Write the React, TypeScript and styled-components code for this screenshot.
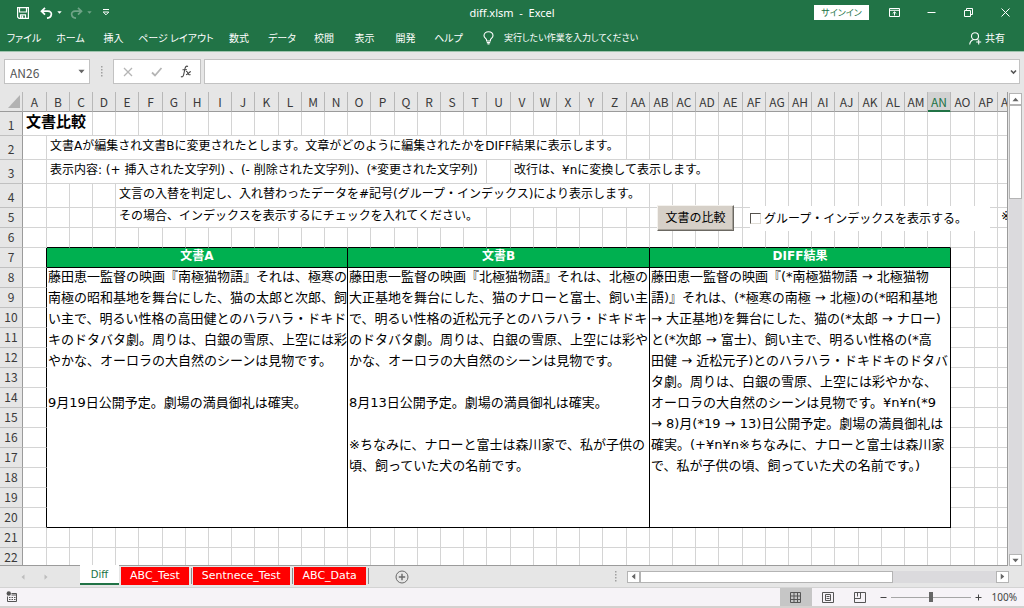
import React from 'react';
import styled, { createGlobalStyle, css } from 'styled-components';

const cjk = '"Noto Sans CJK JP", sans-serif';
const cellFont = `"DejaVu Sans", ${cjk}`;
const green = '#217346';
const grid = '#d4d4d4';
const chrome = '#e6e6e6';

const GlobalStyle = createGlobalStyle`
  *, *::before, *::after { box-sizing: border-box; }
  body { margin: 0; overflow: hidden; background: ${chrome}; }
  button, input { font: inherit; color: inherit; margin: 0; }
`;

const Shell = styled.div`
  display: flex;
  flex-direction: column;
  height: 100vh;
  background: ${chrome};
  font-family: ${cjk};
  font-size: 10px;
  line-height: 16px;
`;

const PlainButton = styled.button`
  display: flex;
  align-items: center;
  justify-content: center;
  padding: 0;
  border: 0;
  background: transparent;
`;

/* Title bar */

const TitleBar = styled.header`
  display: grid;
  grid-template-columns: 1fr auto 1fr;
  align-items: center;
  height: 25px;
  background: ${green};
  color: #fff;
`;

const QuickAccess = styled.div`
  display: flex;
  align-items: center;
  gap: 4px;
  height: 25px;
  padding-left: 17px;
`;

const QuickButton = styled(PlainButton)<{ $dim?: boolean; $after?: number }>`
  opacity: ${(p) => (p.$dim ? 0.35 : 1)};
  margin-right: ${(p) => p.$after ?? 0}px;
`;

const DocTitle = styled.h1`
  margin: 0;
  font: 400 11px/16px "Noto Sans", sans-serif;
  white-space: pre;
`;

const WindowArea = styled.div`
  display: flex;
  align-items: center;
  justify-content: flex-end;
`;

const SignIn = styled(PlainButton)`
  width: 55px;
  height: 15px;
  margin-right: 7px;
  background: #fff;
  color: ${green};
  font-size: 9px;
  font-feature-settings: "palt";
`;

const WindowButton = styled(PlainButton)`
  width: 37px;
  height: 25px;
`;

/* Ribbon */

const Ribbon = styled.nav`
  display: flex;
  align-items: center;
  height: 27px;
  border-bottom: 1px solid #9fc5ae;
  background: ${green};
  color: #fff;
  font-feature-settings: "palt";
`;

const RibbonTab = styled(PlainButton)<{ $width: number }>`
  width: ${(p) => p.$width}px;
  height: 26px;
  white-space: nowrap;
`;

const TellMe = styled(PlainButton)`
  gap: 10px;
  padding-left: 12px;
  font-size: 9px;
  white-space: nowrap;
`;

const Share = styled(PlainButton)`
  gap: 3px;
  margin-left: auto;
  padding-right: 19px;
`;

/* Formula bar */

const FormulaBar = styled.div`
  display: flex;
  align-items: center;
  padding: 7px 4px 8px;
`;

const Field = styled.div`
  display: flex;
  align-items: center;
  height: 25px;
  border: 1px solid #c2c2c2;
  background: #fff;
`;

const NameField = styled(Field)`
  width: 86px;
  padding: 0 4px 0 5px;
`;

const FormulaField = styled(Field)`
  flex: 1;
  margin-left: 3px;
  padding-right: 2px;
`;

const TextInput = styled.input`
  flex: 1;
  min-width: 0;
  height: 22px;
  padding: 2px 0 0;
  border: 0;
  outline: 0;
  background: transparent;
  color: #555;
  font-size: 12px;
`;

const Divider = styled.div`
  display: flex;
  justify-content: center;
  width: 23px;
`;

const FormulaTools = styled(Field)`
  justify-content: space-between;
  width: 88px;
  padding: 0 8px;
`;

/* Worksheet */

const Workspace = styled.div`
  display: flex;
  flex: 1;
  min-height: 0;
`;

const Viewport = styled.main`
  position: relative;
  flex: 1;
  min-width: 0;
  overflow: hidden;
  border-right: 1px solid #9b9b9b;
  border-bottom: 1px solid #9b9b9b;
  background: #fff;
`;

const Sheet = styled.table`
  width: 0;
  table-layout: fixed;
  border-collapse: separate;
  border-spacing: 0;
  font-family: ${cellFont};
  font-size: 12px;
  color: #000;
`;

const Row = styled.tr<{ $height: number }>`
  height: ${(p) => p.$height}px;
`;

const headerText = css`
  padding: 0;
  background: ${chrome};
  color: #3a3a3a;
  font: 400 12px/18px ${cjk};
  text-align: center;
  overflow: hidden;
  white-space: nowrap;
`;

const ColumnHeader = styled.th<{ $selected?: boolean }>`
  ${headerText}
  border-right: 1px solid #b8b8b8;
  border-bottom: 1px solid #9b9b9b;
  ${(p) =>
    p.$selected &&
    css`
      background: #d2d2d2;
      color: ${green};
      border-bottom-color: ${green};
      box-shadow: inset 0 -1px 0 ${green};
    `}
`;

const SelectAllMark = styled.svg`
  display: block;
  margin-left: auto;
`;

const RowHeader = styled.th`
  ${headerText}
  padding-bottom: 1px;
  vertical-align: bottom;
  border-right: 1px solid #9b9b9b;
  border-bottom: 1px solid #c0c0c0;
`;

const Cell = styled.td<{ $edgeRight?: boolean; $edgeBottom?: boolean }>`
  padding: 0 0 3px 3px;
  line-height: 16px;
  white-space: pre;
  vertical-align: middle;
  border-right: 1px solid ${(p) => (p.$edgeRight ? '#000' : grid)};
  border-bottom: 1px solid ${(p) => (p.$edgeBottom ? '#000' : grid)};
`;

const TitleCell = styled(Cell)`
  font-size: 15px;
  font-weight: 700;
`;

const HeadingCell = styled(Cell)`
  padding-left: 0;
  background: #00b050;
  color: #fff;
  font-weight: 700;
  text-align: center;
`;

const BodyCell = styled(Cell)`
  padding: 0 0 0 1px;
  font-size: 13px;
  line-height: 21px;
  vertical-align: top;
  overflow: hidden;
`;

const BodyText = styled.div`
  margin-top: -2px;
`;

const CompareButton = styled.button`
  position: absolute;
  left: 657px;
  top: 113px;
  width: 77px;
  height: 26px;
  padding: 0;
  border: 1px solid;
  border-color: #f4f2ee #6b6862 #6b6862 #f4f2ee;
  box-shadow: inset -1px -1px 0 #a5a199;
  background: #d6d0c8;
  color: #000;
  font-family: ${cellFont};
  font-size: 12px;
`;

const IndexOption = styled.label`
  position: absolute;
  left: 750px;
  top: 114px;
  display: flex;
  align-items: center;
  gap: 3px;
  width: 240px;
  height: 25px;
  background: #fff;
  color: #000;
  font-family: ${cellFont};
  font-size: 12px;
`;

const CheckBox = styled.input`
  appearance: none;
  width: 11px;
  height: 11px;
  border: 1px solid;
  border-color: #55524d #e0ddd6 #e0ddd6 #55524d;
  background: #fff;
`;

/* Scroll bars */

const VerticalBar = styled.div`
  display: flex;
  flex-direction: column;
  width: 16px;
  padding: 1px 2px 0 1px;
`;

const Arrow = styled(PlainButton)`
  flex: none;
  width: 13px;
  height: 12px;
  border: 1px solid #b4b4b4;
  background: #fff;
`;

const VerticalTrack = styled.div`
  flex: 1;
  background: #dbdadd;
`;

const VerticalThumb = styled.div`
  height: 21%;
  border: 1px solid #b4b4b4;
  background: #fff;
`;

const HorizontalBar = styled.div`
  display: flex;
  width: 382px;
  margin-right: 15px;
`;

const HorizontalTrack = styled.div`
  flex: 1;
  background: #dbdadd;
`;

const HorizontalThumb = styled.div`
  width: 71%;
  height: 12px;
  border: 1px solid #b4b4b4;
  background: #fff;
`;

/* Sheet tabs */

const TabStrip = styled.div`
  display: flex;
  align-items: center;
  height: 21px;
`;

const TabNav = styled.div`
  display: flex;
  justify-content: center;
  gap: 17px;
  width: 80px;
  padding-right: 11px;
`;

const Tabs = styled.div`
  position: relative;
  display: flex;
  align-items: center;
  align-self: stretch;
  margin-top: -1px;
  font-family: "DejaVu Sans", sans-serif;
  font-size: 11px;
`;

const ActiveTab = styled(PlainButton)`
  align-self: flex-start;
  width: 39px;
  height: 20px;
  margin-right: 2px;
  padding-top: 2px;
  border-bottom: 2px solid ${green};
  background: #fff;
  color: ${green};
  font-size: 10px;
`;

const RedTab = styled(PlainButton)`
  height: 18px;
  padding: 0 9px;
  background: #f00;
  color: #fff;
`;

const TabGap = styled.span`
  width: 1px;
  height: 16px;
  margin: 0 1px 0 2px;
  background: #8a8a8a;
`;

const AddSheet = styled(PlainButton)`
  margin-left: 25px;
`;

const StripDots = styled.div`
  display: flex;
  margin: 0 10px 0 auto;
`;

/* Status bar */

const StatusBar = styled.footer`
  display: flex;
  align-items: center;
  height: 21px;
  padding: 0 7px 0 6px;
  border-top: 1px solid #d3d3d3;
  border-bottom: 2px solid #d4d1cf;
  background: #f6f3f7;
  color: #444;
  font-family: "Noto Sans", sans-serif;
`;

const ViewButtons = styled.div`
  display: flex;
  align-self: stretch;
  margin-left: auto;
`;

const ViewButton = styled(PlainButton)<{ $on?: boolean }>`
  width: 32px;
  background: ${(p) => (p.$on ? '#c6c6c6' : 'transparent')};
`;

const ZoomControl = styled.div`
  display: flex;
  align-items: center;
  gap: 4px;
  margin: 0 10px 0 4px;
`;

const ZoomRange = styled.input`
  appearance: none;
  width: 80px;
  height: 10px;
  background: linear-gradient(#a6a6a6, #a6a6a6) center / 100% 1px no-repeat;
  &::-webkit-slider-thumb {
    appearance: none;
    width: 4px;
    height: 10px;
    background: #666;
  }
`;

const Caret = ({ color = '#666', turn = 0, size = 7 }: { color?: string; turn?: number; size?: number }) => (
  <svg width={size} height={size} viewBox="0 0 8 8" aria-hidden="true">
    <path d="M0.5 2 H7.5 L4 6 Z" fill={color} transform={`rotate(${turn} 4 4)`} />
  </svg>
);

const Dots = () => (
  <svg width="2" height="11" viewBox="0 0 2 11" fill="#a0a0a0" aria-hidden="true">
    <path d="M0 0h1.500v1.500h-1.500zM0 3h1.500v1.500h-1.500zM0 6h1.500v1.500h-1.500zM0 9h1.500v1.500h-1.500z" />
  </svg>
);

const SaveIcon = () => (
  <svg width="12" height="12" viewBox="0 0 12 12" fill="none" stroke="#fff" strokeWidth="1.200">
    <path d="M0.6 0.6H11.4V11.400H2L0.600 10Z" />
    <path d="M2.500 0.600V5H9.500V0.600M3.500 11.400V7.800H8.500V11.400" />
    <path d="M4.500 8.500H6.200V11H4.500Z" fill="#fff" stroke="none" />
  </svg>
);

const UndoIcon = ({ flip }: { flip?: boolean }) => (
  <svg width="13" height="12" viewBox="0 0 13 12" fill="none" stroke="#fff" strokeWidth="1.700">
    <g transform={flip ? 'translate(13 0) scale(-1 1)' : undefined}>
      <path d="M5 0.800L1.500 4.200L5 7.600M1.800 4.200H7.800C10.500 4.200 11.600 5.800 11.300 7.600C11 9.600 9.500 10.900 7 11.200" />
    </g>
  </svg>
);

const CustomizeIcon = () => (
  <svg width="8" height="7" viewBox="0 0 8 7" fill="none" stroke="#fff">
    <path d="M1 0.500H7M1.200 3H6.800L4 5.800Z" />
  </svg>
);

const RibbonOptionsIcon = () => (
  <svg width="11" height="9" viewBox="0 0 11 9" fill="none" stroke="#fff">
    <path d="M0.500 0.500H10.500V8.500H0.500ZM0.500 2.300H10.500M5.500 7.500V4M3.700 5.500L5.500 3.800L7.300 5.500" />
  </svg>
);

const BulbIcon = () => (
  <svg width="11" height="14" viewBox="0 0 11 14" fill="none" stroke="#fff" strokeWidth="1.100">
    <path d="M3.600 10V8.900C3.600 7.600 1 6.900 1 4.800C1 2.300 2.900 0.700 5.500 0.700S10 2.300 10 4.800C10 6.900 7.400 7.600 7.400 8.900V10Z" />
    <path d="M3.800 11.600H7.200M4.500 13H6.500" />
  </svg>
);

const PersonIcon = () => (
  <svg width="13" height="13" viewBox="0 0 13 13" fill="none" stroke="#fff" strokeWidth="1.100">
    <circle cx="6" cy="4.200" r="3.500" />
    <path d="M0.700 12.500C1 9.500 2.600 8.200 4.600 7.500M7.300 7.300L8.500 8M9.700 7.500V12.500M7.200 10H12.200" />
  </svg>
);

const ribbonTabs: [string, number][] = [
  ['ファイル', 48],
  ['ホーム', 45],
  ['挿入', 41],
  ['ページ レイアウト', 84],
  ['数式', 42],
  ['データ', 44],
  ['校閲', 40],
  ['表示', 41],
  ['開発', 41],
  ['ヘルプ', 45],
];

const columnName = (i: number) =>
  (i >= 26 ? 'A' : '') + String.fromCharCode(65 + (i % 26));

const columns = Array.from({ length: 43 }, (_, i) => ({
  name: columnName(i),
  width: i % 5 === 0 ? 24 : 23,
}));

type Entry = { at: number; span: number; text: string };

const notes: Record<number, Entry[]> = {
  2: [{ at: 1, span: 25, text: '文書Aが編集され文書Bに変更されたとします。文章がどのように編集されたかをDIFF結果に表示します。' }],
  3: [
    { at: 1, span: 19, text: '表示内容: (+ 挿入された文字列) 、(- 削除された文字列)、(*変更された文字列)' },
    { at: 21, span: 9, text: '改行は、¥nに変換して表示します。' },
  ],
  4: [{ at: 4, span: 23, text: '文言の入替を判定し、入れ替わったデータを#記号(グループ・インデックス)により表示します。' }],
  5: [
    { at: 4, span: 16, text: 'その場合、インデックスを表示するにチェックを入れてください。' },
    { at: 42, span: 1, text: '※' },
  ],
};

const documents = [
  {
    heading: '文書A',
    body: `藤田恵一監督の映画『南極猫物語』それは、極寒の
南極の昭和基地を舞台にした、猫の太郎と次郎、飼
い主で、明るい性格の高田健とのハラハラ・ドキド
キのドタバタ劇。周りは、白銀の雪原、上空には彩
やかな、オーロラの大自然のシーンは見物です。

9月19日公開予定。劇場の満員御礼は確実。`,
  },
  {
    heading: '文書B',
    body: `藤田恵一監督の映画『北極猫物語』それは、北極の
大正基地を舞台にした、猫のナローと富士、飼い主
で、明るい性格の近松元子とのハラハラ・ドキドキ
のドタバタ劇。周りは、白銀の雪原、上空には彩や
かな、オーロラの大自然のシーンは見物です。

8月13日公開予定。劇場の満員御礼は確実。

※ちなみに、ナローと富士は森川家で、私が子供の
頃、飼っていた犬の名前です。`,
  },
  {
    heading: 'DIFF結果',
    body: `藤田恵一監督の映画『(*南極猫物語 → 北極猫物
語)』それは、(*極寒の南極 → 北極)の(*昭和基地
→ 大正基地)を舞台にした、猫の(*太郎 → ナロー)
と(*次郎 → 富士)、飼い主で、明るい性格の(*高
田健 → 近松元子)とのハラハラ・ドキドキのドタバ
タ劇。周りは、白銀の雪原、上空には彩やかな、
オーロラの大自然のシーンは見物です。¥n¥n(*9
→ 8)月(*19 → 13)日公開予定。劇場の満員御礼は
確実。(+¥n¥n※ちなみに、ナローと富士は森川家
で、私が子供の頃、飼っていた犬の名前です。)`,
  },
];

const rowNumbers = Array.from({ length: 22 }, (_, i) => i + 1);

const emptyCells = (from: number, to: number, row: number) =>
  columns.slice(from, to).map((c, i) => (
    <Cell
      key={c.name}
      $edgeBottom={row === 6 && from + i >= 1 && from + i <= 39}
      $edgeRight={row >= 7 && row <= 20 && from + i === 0}
    />
  ));

const rowCells = (row: number) => {
  if (row === 1) {
    return (
      <>
        <TitleCell colSpan={3}>文書比較</TitleCell>
        {emptyCells(3, 43, row)}
      </>
    );
  }
  if (row >= 7 && row <= 20) {
    return (
      <>
        {emptyCells(0, 1, row)}
        {row === 7 &&
          documents.map((d) => (
            <HeadingCell key={d.heading} colSpan={13} $edgeRight $edgeBottom>
              {d.heading}
            </HeadingCell>
          ))}
        {row === 8 &&
          documents.map((d) => (
            <BodyCell key={d.heading} colSpan={13} rowSpan={13} $edgeRight $edgeBottom>
              <BodyText>{d.body}</BodyText>
            </BodyCell>
          ))}
        {emptyCells(40, 43, row)}
      </>
    );
  }
  const out: React.ReactNode[] = [];
  let next = 0;
  for (const n of notes[row] ?? []) {
    out.push(...emptyCells(next, n.at, row));
    out.push(
      <Cell key={n.text} colSpan={n.span}>
        {n.text}
      </Cell>,
    );
    next = n.at + n.span;
  }
  out.push(...emptyCells(next, 43, row));
  return out;
};

export default function App() {
  return (
    <Shell>
      <GlobalStyle />
      <TitleBar>
        <QuickAccess>
          <QuickButton aria-label="上書き保存" $after={7}><SaveIcon /></QuickButton>
          <QuickButton aria-label="元に戻す"><UndoIcon /></QuickButton>
          <QuickButton aria-label="元に戻す操作の一覧" $after={4}><Caret color="#fff" size={5} /></QuickButton>
          <QuickButton aria-label="やり直し" $dim><UndoIcon flip /></QuickButton>
          <QuickButton aria-label="やり直し操作の一覧" $dim $after={6}><Caret color="#fff" size={5} /></QuickButton>
          <QuickButton aria-label="クイック アクセス ツール バーのユーザー設定"><CustomizeIcon /></QuickButton>
        </QuickAccess>
        <DocTitle>{'diff.xlsm  -  Excel'}</DocTitle>
        <WindowArea>
          <SignIn>サインイン</SignIn>
          <WindowButton aria-label="リボンの表示オプション"><RibbonOptionsIcon /></WindowButton>
          <WindowButton aria-label="最小化">
            <svg width="9" height="9" viewBox="0 0 9 9" stroke="#fff"><path d="M0.500 4.500H8.500" /></svg>
          </WindowButton>
          <WindowButton aria-label="元のサイズに戻す">
            <svg width="9" height="9" viewBox="0 0 9 9" fill="none" stroke="#fff"><path d="M0.500 2.500H6.500V8.500H0.500ZM2.500 2.500V0.500H8.500V6.500H6.500" /></svg>
          </WindowButton>
          <WindowButton aria-label="閉じる">
            <svg width="9" height="9" viewBox="0 0 9 9" stroke="#fff"><path d="M0.500 0.500L8.500 8.500M8.500 0.500L0.500 8.500" /></svg>
          </WindowButton>
        </WindowArea>
      </TitleBar>

      <Ribbon>
        {ribbonTabs.map(([label, width]) => (
          <RibbonTab key={label} $width={width}>{label}</RibbonTab>
        ))}
        <TellMe><BulbIcon />実行したい作業を入力してください</TellMe>
        <Share><PersonIcon />共有</Share>
      </Ribbon>

      <FormulaBar>
        <NameField>
          <TextInput aria-label="名前ボックス" defaultValue="AN26" />
          <Caret />
        </NameField>
        <Divider><Dots /></Divider>
        <FormulaTools>
          <PlainButton aria-label="キャンセル">
            <svg width="12" height="10" viewBox="0 0 12 10" stroke="#b5b5b5" strokeWidth="1.300"><path d="M2 1L10 9M10 1L2 9" /></svg>
          </PlainButton>
          <PlainButton aria-label="入力">
            <svg width="12" height="10" viewBox="0 0 12 10" fill="none" stroke="#b5b5b5" strokeWidth="1.800"><path d="M1 5.500L4 8.500L10.500 1" /></svg>
          </PlainButton>
          <PlainButton aria-label="関数の挿入">
            <svg width="12" height="13" viewBox="0 0 12 13" fill="none" stroke="#444" strokeWidth="1.100">
              <path d="M8 1.500C6.300 0.600 5.400 1.600 5 3.500L3.700 9.500C3.300 11.500 2.300 12.300 0.900 11.600M2.500 4.800H7M6 6.600C7.200 6.200 7.500 6.800 8 8.200S9 10.200 10.500 9.500M10.800 6.600C9.800 6.500 7.600 9.800 6 9.800" />
            </svg>
          </PlainButton>
        </FormulaTools>
        <FormulaField>
          <TextInput aria-label="数式バー" />
          <PlainButton aria-label="数式バーの展開">
            <svg width="7" height="6" viewBox="0 0 7 6" fill="none" stroke="#555" strokeWidth="1.600"><path d="M1 1.500L3.500 4L6 1.500" /></svg>
          </PlainButton>
        </FormulaField>
      </FormulaBar>

      <Workspace>
        <Viewport>
          <Sheet>
            <colgroup>
              <col width={23} />
              {columns.map((c) => <col key={c.name} width={c.width} />)}
            </colgroup>
            <thead>
              <Row $height={20}>
                <ColumnHeader aria-label="すべて選択">
                  <SelectAllMark width="14" height="14" viewBox="0 0 14 14">
                    <path d="M12 0V13H0Z" fill="#b2b2b2" />
                  </SelectAllMark>
                </ColumnHeader>
                {columns.map((c) => (
                  <ColumnHeader key={c.name} scope="col" $selected={c.name === 'AN'}>{c.name}</ColumnHeader>
                ))}
              </Row>
            </thead>
            <tbody>
              {rowNumbers.map((n) => (
                <Row key={n} $height={n < 5 ? 24 : 20}>
                  <RowHeader scope="row">{n}</RowHeader>
                  {rowCells(n)}
                </Row>
              ))}
            </tbody>
          </Sheet>
          <CompareButton>文書の比較</CompareButton>
          <IndexOption>
            <CheckBox type="checkbox" />
            グループ・インデックスを表示する。
          </IndexOption>
        </Viewport>
        <VerticalBar>
          <Arrow aria-label="上へスクロール"><Caret turn={180} /></Arrow>
          <VerticalTrack><VerticalThumb /></VerticalTrack>
          <Arrow aria-label="下へスクロール"><Caret /></Arrow>
        </VerticalBar>
      </Workspace>

      <TabStrip>
        <TabNav>
          <PlainButton aria-label="前のシート"><Caret turn={90} color="#bdbdbd" size={6} /></PlainButton>
          <PlainButton aria-label="次のシート"><Caret turn={270} color="#bdbdbd" size={6} /></PlainButton>
        </TabNav>
        <Tabs>
          <ActiveTab>Diff</ActiveTab>
          {['ABC_Test', 'Sentnece_Test', 'ABC_Data'].map((t) => (
            <React.Fragment key={t}>
              <RedTab>{t}</RedTab>
              <TabGap />
            </React.Fragment>
          ))}
        </Tabs>
        <AddSheet aria-label="新しいシート">
          <svg width="14" height="14" viewBox="0 0 14 14" fill="none" stroke="#6a6a6a">
            <circle cx="7" cy="7" r="6" />
            <path d="M7 3.800V10.200M3.800 7H10.200" strokeWidth="1.400" />
          </svg>
        </AddSheet>
        <StripDots><Dots /></StripDots>
        <HorizontalBar>
          <Arrow aria-label="左へスクロール"><Caret turn={90} /></Arrow>
          <HorizontalTrack><HorizontalThumb /></HorizontalTrack>
          <Arrow aria-label="右へスクロール"><Caret turn={270} /></Arrow>
        </HorizontalBar>
      </TabStrip>

      <StatusBar>
        <PlainButton aria-label="マクロの記録">
          <svg width="12" height="12" viewBox="0 0 12 12" fill="none" stroke="#555">
            <path d="M5.500 2.500H10.500V10.500H1.500V5.500M5.500 4H10.500" />
            <path d="M3 6.500H9.500M3 8.500H9.500" strokeDasharray="1.500 1" />
            <circle cx="2.800" cy="2.500" r="2.200" fill="#555" stroke="none" />
          </svg>
        </PlainButton>
        <ViewButtons>
          <ViewButton aria-label="標準" $on>
            <svg width="11" height="11" viewBox="0 0 11 11" fill="none" stroke="#555"><path d="M0.500 0.500H10.500V10.500H0.500ZM0.500 4H10.500M0.500 7.500H10.500M4 0.500V10.500M7.500 0.500V10.500" /></svg>
          </ViewButton>
          <ViewButton aria-label="ページ レイアウト">
            <svg width="12" height="11" viewBox="0 0 12 11" fill="none" stroke="#555"><path d="M0.500 0.500H11.500V10.500H0.500ZM3.500 2.500H8.500V8.500H3.500ZM4.500 4.500H7.500M4.500 6.500H7.500" /></svg>
          </ViewButton>
          <ViewButton aria-label="改ページ プレビュー">
            <svg width="12" height="11" viewBox="0 0 12 11" fill="none" stroke="#555"><path d="M0.500 0.500H11.500V10.500H0.500ZM0.500 6.500H6.500V0.500M3.500 0.500V4.500" /></svg>
          </ViewButton>
        </ViewButtons>
        <ZoomControl>
          <PlainButton aria-label="縮小">
            <svg width="7" height="7" viewBox="0 0 7 7" stroke="#444"><path d="M0.500 3.500H6.500" /></svg>
          </PlainButton>
          <ZoomRange type="range" aria-label="ズーム" min={0} max={200} defaultValue={100} />
          <PlainButton aria-label="拡大">
            <svg width="7" height="7" viewBox="0 0 7 7" stroke="#444"><path d="M0.500 3.500H6.500M3.500 0.500V6.500" /></svg>
          </PlainButton>
        </ZoomControl>
        <PlainButton>100%</PlainButton>
      </StatusBar>
    </Shell>
  );
}
